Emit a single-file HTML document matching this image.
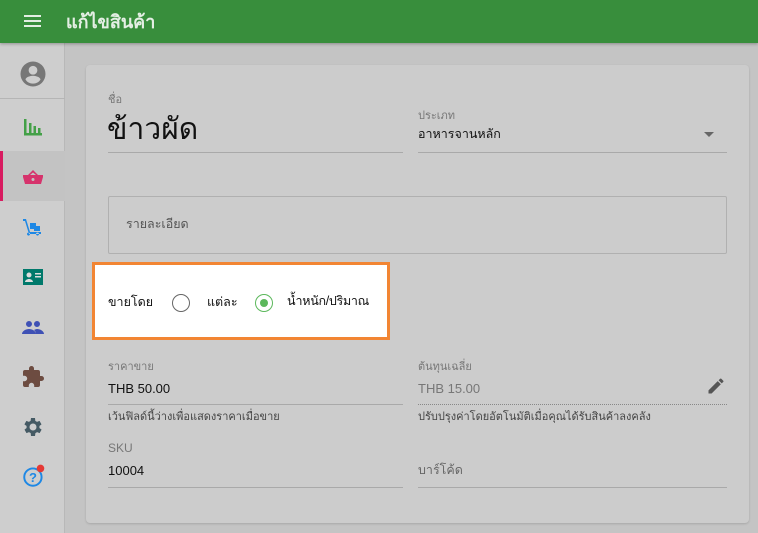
<!DOCTYPE html><html><head><meta charset="utf-8"><style>
*{margin:0;padding:0;box-sizing:border-box}
body{width:758px;height:533px;overflow:hidden;background:#c4c4c4;font-family:"Liberation Sans","Noto Sans CJK SC",sans-serif;position:relative;color:#111}
.hdr{position:absolute;left:0;top:0;width:758px;height:43px;background:#388e3c;box-shadow:0 1px 3px rgba(0,0,0,.3);z-index:2}
.hdr .t{position:absolute;left:66px;top:7px;color:#e3eee3;font-size:18px;font-weight:bold}
.side{position:absolute;left:0;top:43px;width:65px;height:490px;background:#cecece;border-right:1px solid #b8b8b8}
.it{position:absolute;left:0;width:65px;height:50px}
.it svg{position:absolute;left:21px;top:14px}
.card{position:absolute;left:86px;top:65px;width:663px;height:458px;background:#cccccc;border-radius:4px;box-shadow:0 1px 2px rgba(0,0,0,.15)}
.a{position:absolute;white-space:nowrap}
.lbl{font-size:11px;color:#777}
.line{position:absolute;height:1px;background:#a9a9a9}
</style></head><body>
<div class="hdr">
<svg style="position:absolute;left:24px;top:14px" width="18" height="14"><rect y="1" width="17" height="2" fill="#e3eee3"/><rect y="6" width="17" height="2" fill="#e3eee3"/><rect y="11" width="17" height="2" fill="#e3eee3"/></svg>
<div class="t">แก้ไขสินค้า</div></div>
<div class="side">
<div class="it" style="top:3px"><svg style="left:18px;top:13px" width="30" height="30" viewBox="0 0 24 24"><path fill="#777" d="M12 2A10 10 0 1 0 12 22 10 10 0 1 0 12 2zm0 3.5a3.5 3.5 0 1 1 0 7 3.5 3.5 0 0 1 0-7zm0 14.2a7.2 7.2 0 0 1-6-3.2c0-2 4-3.1 6-3.1s6 1.1 6 3.1a7.2 7.2 0 0 1-6 3.2z"/></svg></div>
<div style="position:absolute;left:0;top:55px;width:65px;height:1px;background:#b5b5b5"></div>
<div class="it" style="top:58px"><svg width="24" height="24" viewBox="0 0 24 24"><path fill="#43a047" d="M3 4h2.5v15H3zM3 18h18v2.5H3zM8 8h2.5v10H8zM12.5 11h2.5v7h-2.5zM17 7h0v0zM17 13h2.5v5H17z"/></svg></div>
<div class="it" style="top:108px;background:#c3c3c3"><div style="position:absolute;left:0;top:0;width:3px;height:50px;background:#d81b60"></div><svg width="24" height="24" viewBox="0 0 24 24"><path fill="#d6336c" d="M12 5l-5 5H2v2l2 7h16l2-7v-2h-5zm0 2.5L15 10H9zM12 13a1.5 1.5 0 1 1 0 3 1.5 1.5 0 0 1 0-3z"/></svg></div>
<div class="it" style="top:158px"><svg width="24" height="24" viewBox="0 0 24 24"><path fill="#1e88e5" d="M2 4h3l4 13h11v2H8L4 6H2zM9 8h6v6H9zM13 11h6v5h-6zM9 19a1.5 1.5 0 1 0 0 .1zM18 19a1.5 1.5 0 1 0 0 .1z"/></svg></div>
<div class="it" style="top:208px"><svg width="24" height="24" viewBox="0 0 24 24"><path fill="#00796b" d="M2 4h20v16H2z"/><circle cx="8" cy="10" r="2.5" fill="#ddd"/><path fill="#ddd" d="M4 17c0-2 2.5-3 4-3s4 1 4 3zM14 8h6v1.5h-6zM14 11h6v1.5h-6z"/></svg></div>
<div class="it" style="top:258px"><svg width="24" height="24" viewBox="0 0 24 24"><path fill="#3f51b5" d="M8 6a3 3 0 1 1 0 6 3 3 0 0 1 0-6zM16 6a3 3 0 1 1 0 6 3 3 0 0 1 0-6zM1 19c0-3 4-5 7-5s7 2 7 5zM15 19c0-2-1-3-2-4 1-.5 2-1 3-1 3 0 7 2 7 5z"/></svg></div>
<div class="it" style="top:308px"><svg width="24" height="24" viewBox="0 0 24 24"><path fill="#6d4c41" d="M20.5 11H19V7a2 2 0 0 0-2-2h-4V3.5a2.5 2.5 0 0 0-5 0V5H4a2 2 0 0 0-2 2v3.8h1.5a2.7 2.7 0 0 1 0 5.4H2V20a2 2 0 0 0 2 2h3.8v-1.5a2.7 2.7 0 0 1 5.4 0V22H17a2 2 0 0 0 2-2v-4h1.5a2.5 2.5 0 0 0 0-5z"/></svg></div>
<div class="it" style="top:358px"><svg width="24" height="24" viewBox="0 0 24 24"><path fill="#455a64" d="M19.4 13a7.5 7.5 0 0 0 0-2l2.1-1.6-2-3.5-2.5 1a7 7 0 0 0-1.7-1L15 3h-4l-.4 2.9a7 7 0 0 0-1.7 1l-2.5-1-2 3.5L6.6 11a7.5 7.5 0 0 0 0 2l-2.1 1.6 2 3.5 2.5-1a7 7 0 0 0 1.7 1L11 21h4l.4-2.9a7 7 0 0 0 1.7-1l2.5 1 2-3.5zM13 15.5a3.5 3.5 0 1 1 0-7 3.5 3.5 0 0 1 0 7z" transform="translate(-1 0)"/></svg></div>
<div class="it" style="top:406px"><svg width="26" height="26" viewBox="0 0 24 24"><circle cx="11" cy="13" r="8" fill="none" stroke="#1e88e5" stroke-width="1.8"/><text x="11" y="17.5" font-size="12" font-weight="bold" fill="#1e88e5" text-anchor="middle" font-family="Liberation Sans">?</text><circle cx="18" cy="5" r="3.5" fill="#e53935"/></svg></div>
</div>
<div class="card">
<div class="a lbl" style="left:22px;top:25px">ชื่อ</div>
<div class="a" style="left:21px;top:41px;font-size:30px;color:#111;font-weight:500">ข้าวผัด</div>
<div class="line" style="left:22px;top:87px;width:295px"></div>
<div class="a lbl" style="left:332px;top:41px">ประเภท</div>
<div class="a" style="left:332px;top:59px;font-size:12.5px">อาหารจานหลัก</div>
<svg class="a" style="left:618px;top:67px" width="10" height="6"><path d="M0 0h10L5 5z" fill="#666"/></svg>
<div class="line" style="left:332px;top:87px;width:309px"></div>
<div class="a" style="left:22px;top:131px;width:619px;height:58px;border:1px solid #b0b0b0;border-radius:2px"></div>
<div class="a" style="left:40px;top:149px;font-size:12.5px;color:#555">รายละเอียด</div>
<div class="a" style="left:6px;top:197px;width:298px;height:78px;background:#fff;border:3px solid #f28533"></div>
<div class="a" style="left:22px;top:227px;font-size:12.5px">ขายโดย</div>
<div class="a" style="left:86px;top:229px;width:18px;height:18px;border:1.5px solid #666;border-radius:50%"></div>
<div class="a" style="left:121px;top:227px;font-size:12.5px">แต่ละ</div>
<div class="a" style="left:169px;top:229px;width:18px;height:18px;border:1.5px solid #5cb85c;border-radius:50%"><div style="position:absolute;left:3.5px;top:3.5px;width:8px;height:8px;background:#5cb85c;border-radius:50%"></div></div>
<div class="a" style="left:201px;top:226px;font-size:12.5px;letter-spacing:-0.3px">น้ำหนัก/ปริมาณ</div>
<div class="a lbl" style="left:22px;top:292px">ราคาขาย</div>
<div class="a" style="left:22px;top:316px;font-size:13px">THB 50.00</div>
<div class="line" style="left:22px;top:339px;width:295px"></div>
<div class="a" style="left:22px;top:342px;font-size:11px;color:#444">เว้นฟิลด์นี้ว่างเพื่อแสดงราคาเมื่อขาย</div>
<div class="a lbl" style="left:332px;top:292px">ต้นทุนเฉลี่ย</div>
<div class="a" style="left:332px;top:316px;font-size:13px;color:#777">THB 15.00</div>
<svg class="a" style="left:620px;top:311px" width="20" height="20" viewBox="0 0 24 24"><path fill="#555" d="M3 17.25V21h3.75L17.8 9.94l-3.75-3.75zM20.7 7.04a1 1 0 0 0 0-1.41l-2.34-2.34a1 1 0 0 0-1.41 0l-1.83 1.83 3.75 3.75z"/></svg>
<div class="a" style="left:332px;top:339px;width:309px;border-top:1px dotted #888"></div>
<div class="a" style="left:332px;top:342px;font-size:11px;color:#444">ปรับปรุงค่าโดยอัตโนมัติเมื่อคุณได้รับสินค้าลงคลัง</div>
<div class="a lbl" style="left:22px;top:376px;font-size:12px">SKU</div>
<div class="a" style="left:22px;top:398px;font-size:13px">10004</div>
<div class="line" style="left:22px;top:422px;width:295px"></div>
<div class="a" style="left:332px;top:395px;font-size:12.5px;color:#666">บาร์โค้ด</div>
<div class="line" style="left:332px;top:422px;width:309px"></div>
</div>
</body></html>
